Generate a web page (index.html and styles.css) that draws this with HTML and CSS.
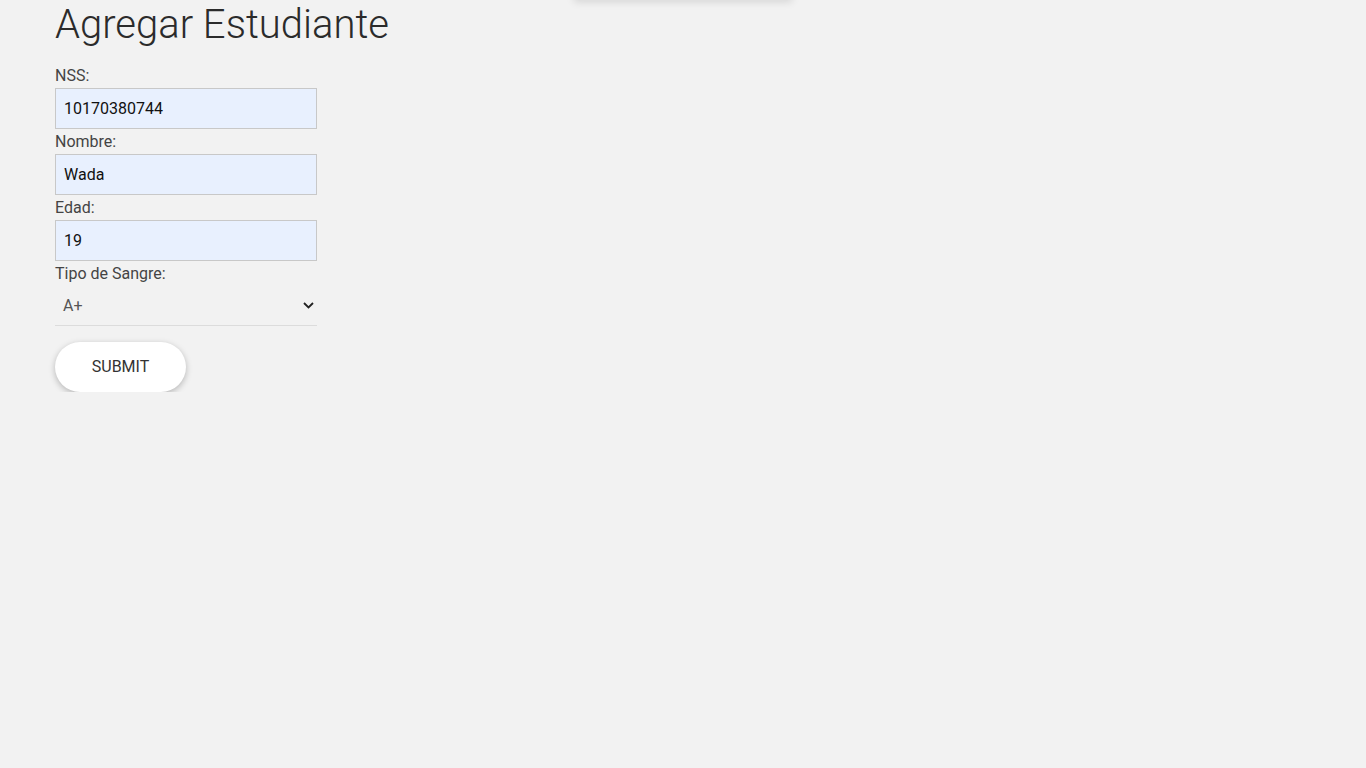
FILE: index.html
```html
<!DOCTYPE html>
<html lang="es">
<head>
<meta charset="utf-8">
<title>Agregar Estudiante</title>
<link rel="stylesheet" href="styles.css">
</head>
<body>
<div class="top-shadow"></div>
<main class="page">
  <h1 class="title">Agregar Estudiante</h1>
  <form class="form">
    <label class="label" for="nss">NSS:</label>
    <input class="field" id="nss" type="text" value="10170380744">
    <label class="label" for="nombre">Nombre:</label>
    <input class="field" id="nombre" type="text" value="Wada">
    <label class="label" for="edad">Edad:</label>
    <input class="field" id="edad" type="text" value="19">
    <label class="label" for="sangre">Tipo de Sangre:</label>
    <div class="select">
      <span class="select-value">A+</span>
      <svg class="chev" width="11" height="7" viewBox="0 0 11 7"><polyline points="1,1 5.5,5.5 10,1" fill="none" stroke="#222" stroke-width="1.8"/></svg>
    </div>
    <button class="btn" type="button">SUBMIT</button>
  </form>
</main>
</body>
</html>
```

FILE: styles.css
```css
html, body {
  margin: 0;
  padding: 0;
  background: #f2f2f2;
  font-family: Roboto, "Liberation Sans", sans-serif;
}
.top-shadow {
  position: absolute;
  top: -40px;
  left: 574px;
  width: 218px;
  height: 40px;
  background: #f2f2f2;
  box-shadow: 0 2px 8px rgba(0,0,0,0.12);
}
.page {
  padding-left: 55px;
}
.title {
  margin: 0;
  padding-top: 2px;
  font-size: 40px;
  font-weight: 300;
  line-height: 46px;
  color: #2b2b2b;
}
.form {
  display: flex;
  flex-direction: column;
  align-items: flex-start;
  margin-top: 16px;
}
.label {
  font-size: 16px;
  line-height: 24px;
  color: #444;
}
.field {
  box-sizing: border-box;
  width: 262px;
  height: 41px;
  margin: 0 0 1px 0;
  padding: 0 8px;
  border: 1px solid #c8c8c8;
  background: #e8f0fe;
  font-family: Roboto, "Liberation Sans", sans-serif;
  font-size: 16px;
  color: #111;
  outline: none;
}
.select {
  box-sizing: border-box;
  width: 262px;
  height: 39px;
  margin-top: 1px;
  padding: 0 3px 2px 8px;
  border-bottom: 1px solid #dcdcdc;
  display: flex;
  align-items: center;
  justify-content: space-between;
  font-size: 16px;
  color: #555;
}
.btn {
  margin-top: 16px;
  width: 131px;
  height: 50px;
  padding: 0 0 2px 0;
  border: none;
  border-radius: 25px;
  background: #fff;
  box-shadow: 0 2px 6px rgba(0,0,0,0.25);
  font-family: Roboto, "Liberation Sans", sans-serif;
  font-size: 16px;
  color: #333;
  cursor: pointer;
}
```
